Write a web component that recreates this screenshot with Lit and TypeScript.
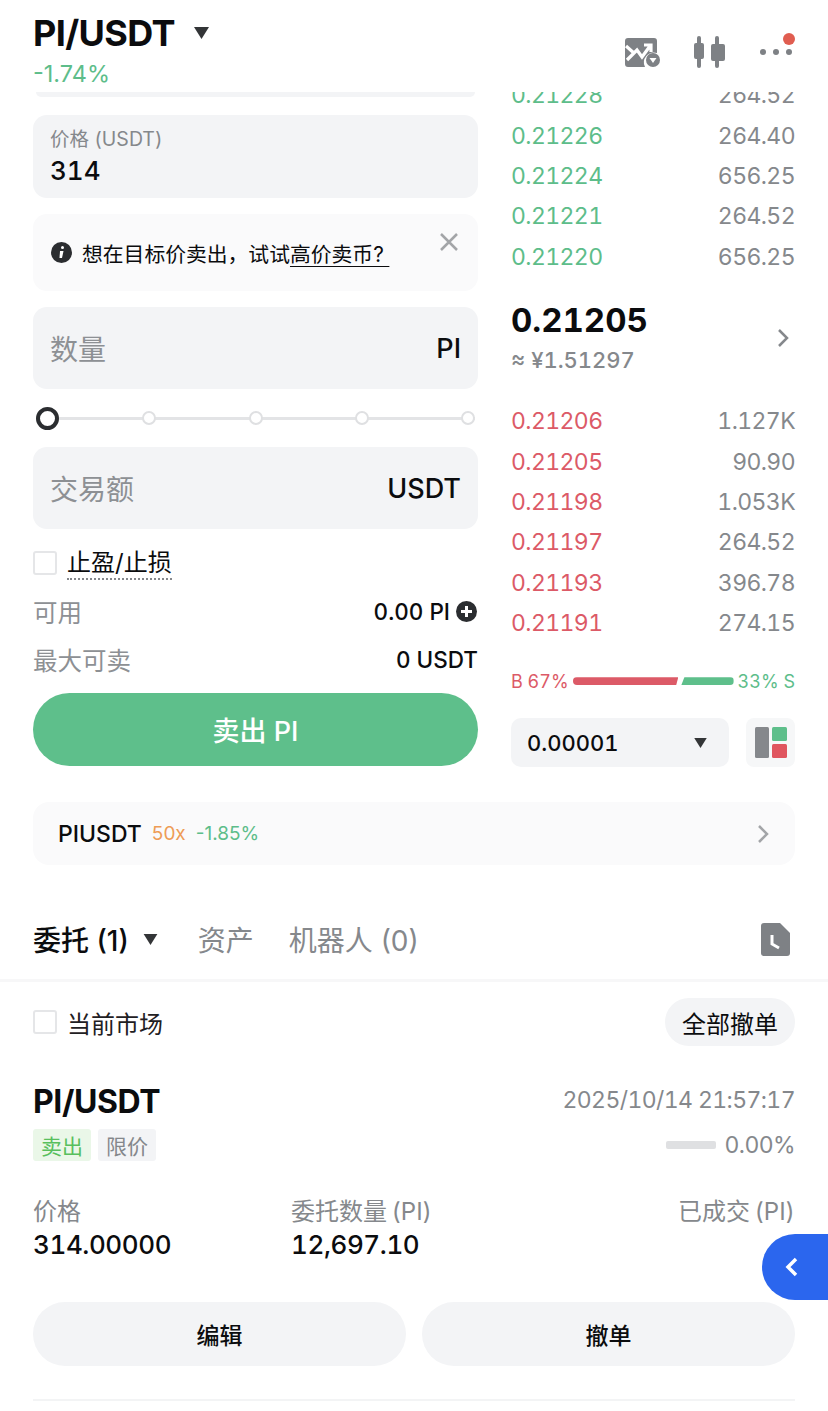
import {LitElement, css, html, svg} from 'lit'
import {customElement} from 'lit/decorators.js'

const asks = [
  ['0.21228', '264.52'],
  ['0.21226', '264.40'],
  ['0.21224', '656.25'],
  ['0.21221', '264.52'],
  ['0.21220', '656.25'],
]

const bids = [
  ['0.21206', '1.127K'],
  ['0.21205', '90.90'],
  ['0.21198', '1.053K'],
  ['0.21197', '264.52'],
  ['0.21193', '396.78'],
  ['0.21191', '274.15'],
]

const caret = (w: number, h: number) => svg`
  <svg width="${w}" height="${h}" viewBox="0 0 10 8"><path d="M0 0h10L5 8z" fill="#333537"/></svg>
`

@customElement('app-root')
export class AppRoot extends LitElement {

  static styles = css`
    :host {
      display: block;
      width: 828px;
      height: 1411px;
      overflow: hidden;
      position: relative;
      background: #fff;
      color: #0b0c0e;
      font-family: Inter, "Noto Sans CJK SC", sans-serif;
      font-variant-numeric: tabular-nums;
    }

    .header {
      height: 92px;
      padding: 14px 33px 0;
      box-sizing: border-box;
      display: flex;
      justify-content: space-between;
    }
    .pair {
      display: flex;
      align-items: center;
      gap: 18px;
      font-size: 36px;
      line-height: 38px;
      font-weight: 700;
      letter-spacing: -0.6px;
    }
    .change {
      margin-top: 9px;
      font-size: 23.500px;
      line-height: 26px;
      font-variant-numeric: normal;
      color: #5dbd8a;
    }
    .tools {
      display: flex;
      align-items: flex-start;
      gap: 33px;
      padding-top: 22px;
    }
    .tools svg { display: block; }
    .tools .chart { margin-top: 2px; }
    .tools .more { margin-top: -3px; }

    .trade {
      height: 710px;
      display: flex;
      gap: 33px;
      padding: 0 33px;
      overflow: hidden;
    }
    .form {
      width: 445px;
      flex: none;
      display: flex;
      flex-direction: column;
    }
    .field-end {
      height: 5px;
      margin: 0 3px 18px;
      background: #f3f4f6;
      border-radius: 0 0 14px 14px;
    }
    .price {
      height: 83px;
      box-sizing: border-box;
      padding: 12px 17px;
      background: #f3f4f6;
      border-radius: 14px;
    }
    .price .label {
      font-size: 19.500px;
      line-height: 24px;
      color: #85888c;
    }
    .price .value {
      margin-top: 4px;
      font-size: 26px;
      line-height: 32px;
      font-weight: 500;
    }
    .notice {
      height: 77px;
      box-sizing: border-box;
      margin: 16px 0;
      padding: 0 18px;
      display: flex;
      align-items: center;
      gap: 10px;
      background: #fafafb;
      border-radius: 14px;
      font-size: 20.800px;
      position: relative;
    }
    .notice u { text-underline-offset: 4px; text-decoration-thickness: 1px; }
    .notice .close { position: absolute; right: 20px; top: 19px; }
    .input {
      height: 82px;
      box-sizing: border-box;
      padding: 0 17px;
      display: flex;
      align-items: center;
      justify-content: space-between;
      background: #f3f4f6;
      border-radius: 14px;
      font-size: 28px;
      color: #8d9094;
    }
    .input span:last-child {
      font-size: 27px;
      font-weight: 500;
      color: #0b0c0e;
    }
    .slider {
      height: 58px;
      margin: 0 3px;
      display: flex;
      align-items: center;
      justify-content: space-between;
      background: linear-gradient(#e3e4e6, #e3e4e6) center / 100% 3px no-repeat;
    }
    .slider i {
      width: 14px;
      height: 14px;
      box-sizing: border-box;
      background: #fff;
      border: 2px solid #dfe0e2;
      border-radius: 50%;
    }
    .slider i:first-child {
      width: 23px;
      height: 23px;
      margin-right: -9px;
      border: 4px solid #2b2d30;
    }
    .check {
      display: flex;
      align-items: center;
      gap: 10px;
      font-size: 24px;
    }
    .box {
      width: 24px;
      height: 24px;
      box-sizing: border-box;
      border: 2px solid #e5e6e8;
      border-radius: 3px;
    }
    .tpsl {
      margin-top: 17px;
      height: 34px;
    }
    .tpsl span {
      line-height: 31px;
      border-bottom: 2px dotted #85888c;
    }
    .line {
      display: flex;
      align-items: center;
      justify-content: space-between;
      height: 48px;
      font-size: 24.500px;
      color: #8d9094;
    }
    .line b {
      display: flex;
      align-items: center;
      gap: 6px;
      font-size: 22.500px;
      font-weight: 500;
      color: #0b0c0e;
    }
    .line b svg { margin-right: 1px; }
    .avail { margin-top: 7px; }
    .sell {
      height: 73px;
      margin-top: 10px;
      display: flex;
      align-items: center;
      justify-content: center;
      background: #5ebf8b;
      border-radius: 37px;
      color: #fff;
      font-size: 27px;
      font-weight: 500;
    }

    .book {
      width: 284px;
      flex: none;
      display: flex;
      flex-direction: column;
    }
    .rows { display: flex; flex-direction: column; }
    .rows.top { margin-top: -17px; }
    .row {
      display: flex;
      justify-content: space-between;
      height: 40.4px;
      align-items: center;
      font-size: 23px;
      letter-spacing: -0.6px;
      color: #85888c;
    }
    .row .green { color: #5dbd8a; }
    .row .red { color: #dc5a67; }
    .mid {
      height: 124px;
      box-sizing: border-box;
      padding-top: 23px;
      position: relative;
    }
    .mid .last {
      font-size: 33px;
      line-height: 40px;
      font-weight: 700;
    }
    .mid .cny {
      margin-top: 6px;
      font-size: 22px;
      line-height: 28px;
      font-weight: 500;
      color: #85888c;
    }
    .mid svg { position: absolute; right: 6px; top: 51px; }
    .ratio {
      height: 44px;
      margin-top: 16px;
      display: flex;
      align-items: center;
      gap: 4px;
      font-size: 18px;
    }
    .ratio .b { color: #dc5a67; }
    .ratio .s { color: #5dbd8a; }
    .bar { flex: 1; display: flex; gap: 3px; height: 8px; }
    .bar i { display: block; height: 8px; }
    .bar .buy {
      flex: 107;
      background: #dc5a67;
      border-radius: 4px 0 0 4px;
      clip-path: polygon(0 0, 100% 0, 98% 100%, 0 100%);
    }
    .bar .ask {
      flex: 53;
      background: #5ebf8b;
      border-radius: 0 4px 4px 0;
      clip-path: polygon(6% 0, 100% 0, 100% 100%, 0 100%);
    }
    .depth {
      margin-top: 15px;
      display: flex;
      justify-content: space-between;
    }
    .select {
      width: 218px;
      height: 49px;
      box-sizing: border-box;
      padding: 0 22px 0 16px;
      display: flex;
      align-items: center;
      justify-content: space-between;
      background: #f3f4f6;
      border-radius: 10px;
      font-size: 22px;
      font-weight: 500;
    }
    .view {
      width: 49px;
      height: 49px;
      display: flex;
      align-items: center;
      justify-content: center;
      background: #f6f7f8;
      border-radius: 8px;
    }

    .perp {
      height: 63px;
      margin: 0 33px;
      box-sizing: border-box;
      padding: 0 25px;
      display: flex;
      align-items: center;
      gap: 10px;
      background: #fafafb;
      border-radius: 16px;
      font-size: 23px;
      font-weight: 500;
      font-variant-numeric: normal;
    }
    .perp .lev { font-size: 19px; font-weight: 400; color: #ee9c56; }
    .perp .pct { font-size: 19px; font-weight: 400; color: #5dbd8a; }
    .perp svg { margin-left: auto; margin-right: 1px; }

    .tabs {
      height: 117px;
      box-sizing: border-box;
      padding: 34px 38px 0 33px;
      display: flex;
      align-items: center;
      gap: 35px;
      border-bottom: 3px solid #f7f7f8;
      font-size: 28px;
      font-variant-numeric: normal;
      color: #85888c;
    }
    .tabs .on {
      display: flex;
      align-items: center;
      gap: 14px;
      margin-right: 5px;
      font-weight: 500;
      color: #0b0c0e;
    }
    .tabs svg:last-child { margin-left: auto; }

    .filter {
      height: 80px;
      padding: 0 33px;
      display: flex;
      align-items: center;
      justify-content: space-between;
    }
    .filter .check { color: #1f2023; }
    .pill {
      height: 48px;
      padding: 0 17px;
      display: flex;
      align-items: center;
      background: #f3f4f6;
      border-radius: 24px;
      font-size: 24px;
    }

    .order { padding: 0 33px; }
    .order-head {
      display: flex;
      justify-content: space-between;
      align-items: flex-start;
      height: 96px;
      padding-top: 21px;
      box-sizing: border-box;
    }
    .order-name {
      font-size: 32px;
      line-height: 38px;
      font-weight: 700;
      letter-spacing: -0.4px;
    }
    .tags { display: flex; gap: 7px; margin-top: 8px; }
    .tag {
      height: 32px;
      padding: 0 8px;
      display: flex;
      align-items: center;
      font-size: 21px;
      border-radius: 3px;
    }
    .tag.sell-tag { background: #eaf7e8; color: #58bf5d; }
    .tag.limit { background: #f3f4f6; color: #85888c; }
    .order-meta {
      display: flex;
      flex-direction: column;
      align-items: flex-end;
      margin-top: 3px;
      font-size: 23px;
      letter-spacing: -0.6px;
      color: #85888c;
    }
    .order-meta div { line-height: 28px; }
    .fill {
      display: flex;
      align-items: center;
      gap: 8px;
      margin-top: 17px;
    }
    .fill i { width: 50px; height: 8px; background: #dfe0e2; border-radius: 2px; }
    .cols {
      margin-top: 38px;
      display: grid;
      grid-template-columns: 258px 1fr 1fr;
      font-size: 24px;
      line-height: 32px;
      word-spacing: -2px;
      color: #85888c;
    }
    .cols div:last-child { text-align: right; }
    .cols b {
      display: block;
      font-size: 26px;
      line-height: 34px;
      font-weight: 500;
      letter-spacing: -0.4px;
      color: #0b0c0e;
    }
    .actions {
      margin-top: 40px;
      display: grid;
      grid-template-columns: 1fr 1fr;
      gap: 16px;
    }
    .actions div {
      height: 64px;
      display: flex;
      align-items: center;
      justify-content: center;
      background: #f3f4f6;
      border-radius: 32px;
      font-size: 23px;
      font-weight: 500;
    }
    .rule {
      height: 2px;
      margin-top: 33px;
      background: #f3f4f5;
    }

    .float {
      position: absolute;
      right: 0;
      top: 1234px;
      width: 66px;
      height: 66px;
      display: flex;
      align-items: center;
      justify-content: center;
      padding-right: 6px;
      box-sizing: border-box;
      background: #2b66ee;
      border-radius: 33px 0 0 33px;
    }
  `

  render() {
    return html`
      <div class="header">
        <div>
          <div class="pair">PI/USDT ${caret(17, 12)}</div>
          <div class="change">-1.74%</div>
        </div>
        <div class="tools">
          <svg class="chart" width="36" height="30" viewBox="0 0 36 30">
            <path d="M3 0h26a3 3 0 0 1 3 3v12a10 10 0 0 0-12 14H3a3 3 0 0 1-3-3V3a3 3 0 0 1 3-3z" fill="#7e8185"/>
            <path d="M1 8l9 8M2 22l10-10 5 7 8-11M19 7h7v7" fill="none" stroke="#fff" stroke-width="3.200"/>
            <circle cx="28" cy="22" r="7" fill="#7e8185"/>
            <path d="M24.500 20h7L28 25z" fill="#fff"/>
          </svg>
          <svg width="32" height="32" viewBox="0 0 32 32" fill="#7e8185">
            <rect x="3" y="0" width="4" height="32" rx="2"/>
            <rect x="0" y="7" width="10" height="16" rx="2"/>
            <rect x="21" y="0" width="4" height="32" rx="2"/>
            <rect x="17" y="8" width="14" height="17" rx="2"/>
          </svg>
          <svg class="more" width="36" height="36" viewBox="0 0 36 36">
            <circle cx="4" cy="19" r="3" fill="#7e8185"/>
            <circle cx="17" cy="19" r="3" fill="#7e8185"/>
            <circle cx="30" cy="19" r="3" fill="#7e8185"/>
            <circle cx="30" cy="6" r="6" fill="#e05d50"/>
          </svg>
        </div>
      </div>

      <div class="trade">
        <div class="form">
          <div class="field-end"></div>
          <div class="price">
            <div class="label">价格 (USDT)</div>
            <div class="value">314</div>
          </div>
          <div class="notice">
            <svg width="21" height="21" viewBox="0 0 21 21">
              <circle cx="10.500" cy="10.500" r="10.500" fill="#2b2d30"/>
              <circle cx="11.500" cy="5.500" r="1.500" fill="#fff"/>
              <path d="M9 9h3.500l-1.500 7h-2.500z" fill="#fff"/>
            </svg>
            <span>想在目标价卖出，试试<u>高价卖币?&nbsp;</u></span>
            <svg class="close" width="18" height="18" viewBox="0 0 18 18">
              <path d="M1 1l16 16M17 1L1 17" stroke="#a3a5a8" stroke-width="2.500"/>
            </svg>
          </div>
          <div class="input"><span>数量</span><span>PI</span></div>
          <div class="slider"><i></i><i></i><i></i><i></i><i></i></div>
          <div class="input"><span>交易额</span><span>USDT</span></div>
          <div class="check tpsl"><div class="box"></div><span>止盈/止损</span></div>
          <div class="line avail">
            <span>可用</span>
            <b>0.00 PI
              <svg width="21" height="21" viewBox="0 0 21 21">
                <circle cx="10.500" cy="10.500" r="10.500" fill="#2b2d30"/>
                <path d="M10.500 5v11M5 10.500h11" stroke="#fff" stroke-width="3"/>
              </svg>
            </b>
          </div>
          <div class="line"><span>最大可卖</span><b>0 USDT</b></div>
          <div class="sell">卖出 PI</div>
        </div>

        <div class="book">
          <div class="rows top">
            ${asks.map(r => html`<div class="row"><span class="green">${r[0]}</span><span>${r[1]}</span></div>`)}
          </div>
          <div class="mid">
            <div class="last">0.21205</div>
            <div class="cny">≈ ¥1.51297</div>
            <svg width="12" height="20" viewBox="0 0 12 20">
              <path d="M2 2l8 8-8 8" fill="none" stroke="#85888c" stroke-width="2.500"/>
            </svg>
          </div>
          <div class="rows">
            ${bids.map(r => html`<div class="row"><span class="red">${r[0]}</span><span>${r[1]}</span></div>`)}
          </div>
          <div class="ratio">
            <span class="b">B 67%</span>
            <div class="bar"><i class="buy"></i><i class="ask"></i></div>
            <span class="s">33% S</span>
          </div>
          <div class="depth">
            <div class="select">0.00001 ${caret(13, 10)}</div>
            <div class="view">
              <svg width="32" height="31" viewBox="0 0 32 31">
                <rect x="0" y="0" width="14" height="31" rx="1.500" fill="#85888c"/>
                <rect x="17" y="0" width="15" height="14" rx="1.500" fill="#5ebf8b"/>
                <rect x="17" y="17" width="15" height="14" rx="1.500" fill="#e0555f"/>
              </svg>
            </div>
          </div>
        </div>
      </div>

      <div class="perp">
        <span>PIUSDT</span>
        <span class="lev">50x</span>
        <span class="pct">-1.85%</span>
        <svg width="12" height="20" viewBox="0 0 12 20">
          <path d="M2 2l8 8-8 8" fill="none" stroke="#a3a5a8" stroke-width="2.500"/>
        </svg>
      </div>

      <div class="tabs">
        <span class="on">委托 (1) ${caret(15, 11)}</span>
        <span>资产</span>
        <span>机器人 (0)</span>
        <svg width="29" height="33" viewBox="0 0 29 33">
          <path d="M3 0h16l10 10v20a3 3 0 0 1-3 3H3a3 3 0 0 1-3-3V3a3 3 0 0 1 3-3z" fill="#7e8185"/>
          <path d="M11 12v9l7 4" fill="none" stroke="#fff" stroke-width="3"/>
        </svg>
      </div>

      <div class="filter">
        <div class="check"><div class="box"></div><span>当前市场</span></div>
        <div class="pill">全部撤单</div>
      </div>

      <div class="order">
        <div class="order-head">
          <div>
            <div class="order-name">PI/USDT</div>
            <div class="tags">
              <span class="tag sell-tag">卖出</span>
              <span class="tag limit">限价</span>
            </div>
          </div>
          <div class="order-meta">
            <div>2025/10/14 21:57:17</div>
            <div class="fill"><i></i><span>0.00%</span></div>
          </div>
        </div>
        <div class="cols">
          <div>价格<b>314.00000</b></div>
          <div>委托数量 (PI)<b>12,697.10</b></div>
          <div>已成交 (PI)</div>
        </div>
        <div class="actions"><div>编辑</div><div>撤单</div></div>
        <div class="rule"></div>
      </div>

      <div class="float">
        <svg width="14" height="22" viewBox="0 0 14 22">
          <path d="M11 3L3 11l8 8" fill="none" stroke="#fff" stroke-width="3.500"/>
        </svg>
      </div>
    `
  }
}
